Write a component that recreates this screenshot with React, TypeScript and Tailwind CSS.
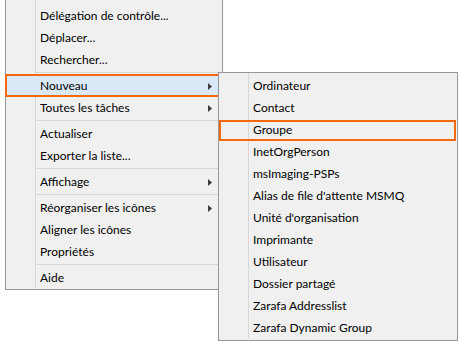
import React from 'react'

// Menu contextuel « Nouveau » ouvert, avec les deux encadrés orange d'annotation.

type Entry = { label: string; sub?: boolean; active?: boolean } | 'sep'

const MAIN: Entry[] = [
  { label: 'Délégation de contrôle...' },
  { label: 'Déplacer...' },
  { label: 'Rechercher...' },
  'sep',
  { label: 'Nouveau', sub: true, active: true },
  { label: 'Toutes les tâches', sub: true },
  'sep',
  { label: 'Actualiser' },
  { label: 'Exporter la liste...' },
  'sep',
  { label: 'Affichage', sub: true },
  'sep',
  { label: 'Réorganiser les icônes', sub: true },
  { label: 'Aligner les icônes' },
  { label: 'Propriétés' },
  'sep',
  { label: 'Aide' },
]

const SUB = [
  'Ordinateur',
  'Contact',
  'Groupe',
  'InetOrgPerson',
  'msImaging-PSPs',
  "Alias de file d'attente MSMQ",
  "Unité d'organisation",
  'Imprimante',
  'Utilisateur',
  'Dossier partagé',
  'Zarafa Addresslist',
  'Zarafa Dynamic Group',
]

function Arrow() {
  return (
    <svg width="4" height="7" viewBox="0 0 4 7" className="ml-auto mr-[10px] shrink-0">
      <path d="M0 0 L4 3.5 L0 7 Z" fill="#3c3c3c" />
    </svg>
  )
}

export default function App() {
  return (
    <div
      className="relative h-[347px] w-[462px] overflow-hidden bg-white text-[12px] text-black"
      style={{ fontFamily: 'Lato, "Noto Sans", sans-serif' }}
    >
      {/* menu principal — le bord supérieur est hors cadre */}
      <div className="absolute left-[5px] top-0 flex w-[218px] flex-col border border-t-0 border-[#979797] bg-[#f0f0f0] pt-[5px]">
        <div className="absolute bottom-[1px] left-[29px] top-0 w-px bg-[#d7d7d7]" />
        {MAIN.map((e, i) =>
          e === 'sep' ? (
            <div key={i} className="h-[4px] pl-[30px] pt-[1px]">
              <div className="h-px bg-[#d7d7d7]" />
            </div>
          ) : (
            <div
              key={i}
              className={`relative flex h-[22px] items-center pl-[34px] ${e.active ? 'bg-[#dae8f8]' : ''}`}
            >
              {e.active && (
                <div className="absolute -left-[1px] -top-[1px] h-[23px] w-[215px] border-2 border-[#f5690c]" />
              )}
              <span className="relative">{e.label}</span>
              {e.sub && <Arrow />}
            </div>
          ),
        )}
      </div>

      {/* sous-menu Nouveau */}
      <div className="absolute left-[218px] top-[72px] flex w-[240px] flex-col border border-[#979797] bg-[#f0f0f0] pb-[1px] pt-[2px]">
        <div className="absolute bottom-[2px] left-[29px] top-0 w-px bg-[#d7d7d7]" />
        {SUB.map((label) => (
          <div key={label} className="relative flex h-[22px] items-center pl-[34px]">
            {label === 'Groupe' && (
              <div className="absolute left-0 top-[1px] h-[21px] w-[237px] border-2 border-[#f5690c]" />
            )}
            <span className="relative">{label}</span>
          </div>
        ))}
      </div>
    </div>
  )
}
